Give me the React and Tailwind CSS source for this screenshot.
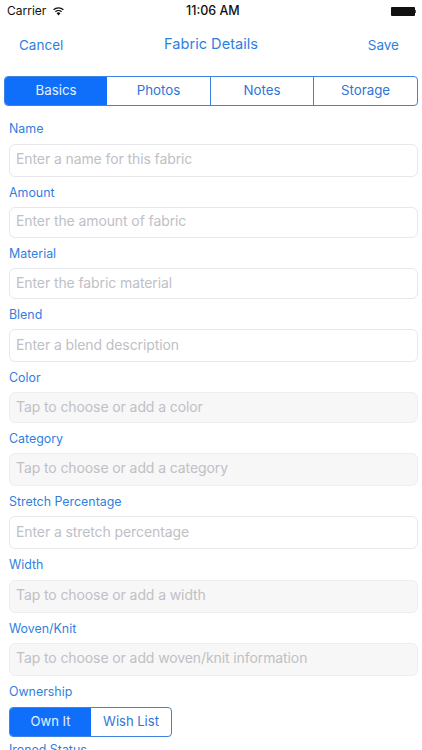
const font = { fontFamily: '"Inter", "Liberation Sans", sans-serif' };

const fields = [
  { label: "Name", ph: "Enter a name for this fabric", h: "h-[33px] pb-[4px]", lm: "mb-[7px]" },
  { label: "Amount", ph: "Enter the amount of fabric", h: "h-[31px] pb-[4px]", lm: "mb-[6px]" },
  { label: "Material", ph: "Enter the fabric material", h: "h-[31px] pb-[2px]", lm: "mb-[6px]" },
  { label: "Blend", ph: "Enter a blend description", h: "h-[33px] pb-[2px]", lm: "mb-[6px]" },
  { label: "Color", ph: "Tap to choose or add a color", h: "h-[31px] pb-[3px]", lm: "mb-[6px]", gray: true },
  { label: "Category", ph: "Tap to choose or add a category", h: "h-[33px] pb-[4px]", lm: "mb-[6px]", gray: true },
  { label: "Stretch Percentage", ph: "Enter a stretch percentage", h: "h-[33px] pb-[3px]", lm: "mb-[6px]" },
  { label: "Width", ph: "Tap to choose or add a width", h: "h-[33px] pb-[5px]", lm: "mb-[7px]", gray: true },
  { label: "Woven/Knit", ph: "Tap to choose or add woven/knit information", h: "h-[33px] pb-[5px]", lm: "mb-[6px]", gray: true },
];

function Wifi() {
  return (
    <svg width="13" height="10" viewBox="0 0 14 11" className="ml-[6px]">
      <path d="M7 10.5 L4.9 8 A3 3 0 0 1 9.1 8 Z" fill="#111" />
      <path d="M3.6 6.3 A5 5 0 0 1 10.4 6.3" stroke="#111" strokeWidth="1.4" fill="none" />
      <path d="M1.6 4.2 A7.8 7.8 0 0 1 12.4 4.2" stroke="#111" strokeWidth="1.4" fill="none" />
    </svg>
  );
}

export default function App() {
  return (
    <div className="w-[422px] h-[750px] overflow-hidden bg-white" style={font}>
      <div className="h-[22px] flex items-center justify-between relative pl-[7px] pr-[6px] text-[#111]">
        <div className="flex items-center text-[12px]">
          Carrier
          <Wifi />
        </div>
        <div className="absolute left-[186px] text-[12.5px] font-medium">11:06 AM</div>
        <div className="flex items-center">
          <div className="w-[24px] h-[9px] bg-[#111] rounded-[1px]" />
          <div className="w-[1px] h-[3px] bg-[#555]" />
        </div>
      </div>
      <div className="h-[54px] pb-[8px] grid grid-cols-[1fr_auto_1fr] items-center pl-[19px] pr-[19px] text-[#2f7fe0]">
        <span className="text-[13.5px] pt-[1px]">Cancel</span>
        <span className="text-[14.6px]">Fabric Details</span>
        <span className="text-[13.5px] pt-[1px] pr-[4px] text-right">Save</span>
      </div>
      <div className="mx-[4px] h-[30px] flex border border-[#3f83e0] rounded-[4px] overflow-hidden text-[13.3px] text-[#2f75d8]">
        <div className="w-[102px] bg-[#0f6ffa] text-white/90 flex items-center justify-center">Basics</div>
        <div className="w-[104px] flex items-center justify-center border-r border-[#3f83e0]">Photos</div>
        <div className="w-[103px] flex items-center justify-center border-r border-[#3f83e0]">Notes</div>
        <div className="flex-1 flex items-center justify-center">Storage</div>
      </div>
      <div className="pl-[9px] pr-[4px] pt-[15px]">
        {fields.map((f) => (
          <div key={f.label} className="mb-[8px]">
            <div className={`h-[16px] flex items-center text-[12.4px] text-[#2f7fe0] ${f.lm}`}>{f.label}</div>
            <div
              className={`${f.h} flex items-center pl-[6px] rounded-[6px] border text-[14px] tracking-[-0.1px] text-[#c0c0c6] ${
                f.gray ? "bg-[#f7f7f7] border-[#eeeeee]" : "bg-white border-[#e8e8ec]"
              }`}
            >
              {f.ph}
            </div>
          </div>
        ))}
        <div className="h-[16px] flex items-center text-[12.4px] text-[#2f7fe0] mb-[7px]">Ownership</div>
        <div className="w-[163px] h-[30px] flex border border-[#3f83e0] rounded-[4px] overflow-hidden text-[13px]">
          <div className="w-[81px] bg-[#0f6ffa] text-white/90 flex items-center justify-center">Own It</div>
          <div className="flex-1 text-[#2f75d8] flex items-center justify-center">Wish List</div>
        </div>
        <div className="mt-[5px] h-[16px] flex items-center text-[12.4px] text-[#2f7fe0]">Ironed Status</div>
      </div>
    </div>
  );
}
